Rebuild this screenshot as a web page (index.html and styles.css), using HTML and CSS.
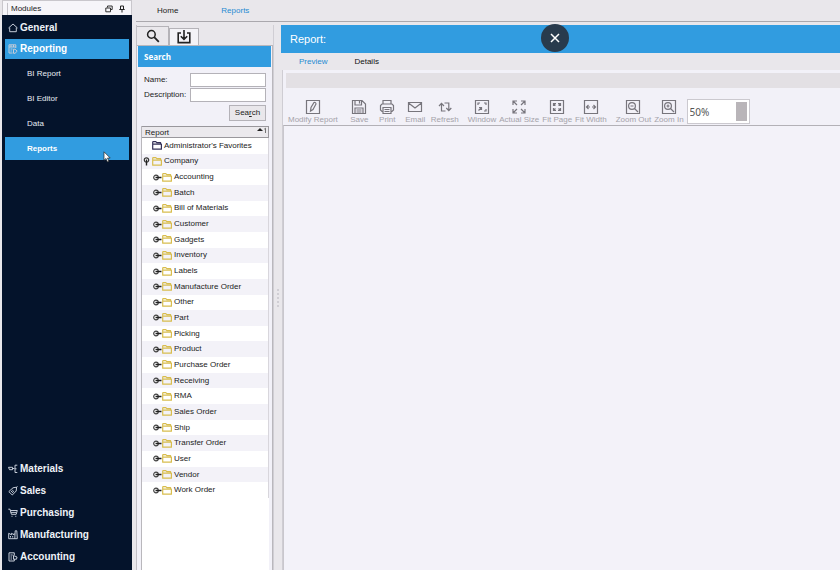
FILE: index.html
```html
<!DOCTYPE html>
<html lang="en">
<head>
<meta charset="utf-8">
<title>Reports</title>
<link rel="stylesheet" href="styles.css">
</head>
<body>
<svg class="sprite" aria-hidden="true">
  <symbol id="folder" viewBox="0 0 10 9"><path d="M.7 8.2V1.2Q.7.6 1.3.6H3.8L4.8 1.7H8.6V3.2M.7 8.2V3.2H9.4V8.2Z" fill="none" stroke="currentColor" stroke-width="1.2" stroke-linejoin="round"/></symbol>
  <symbol id="handle" viewBox="0 0 9 7"><circle cx="3" cy="3.5" r="2.3" fill="#fff" stroke="#444" stroke-width="1.2"/><path d="M2.5 3.5H8.5" stroke="#222" stroke-width="1.5"/></symbol>
  <symbol id="handle-open" viewBox="0 0 7 9"><circle cx="3.5" cy="3" r="2.2" fill="#fff" stroke="#333" stroke-width="1.2"/><path d="M3.5 2.5V8.5" stroke="#222" stroke-width="1.4"/></symbol>
</svg>

<aside class="sidebar">
  <header class="dock-title">
    <span>Modules</span>
    <button class="dock-button" aria-label="Float"><svg viewBox="0 0 8 8" width="8" height="8"><path d="M2.5 2.5V1H7.2V4.5H5.7M.8 3H5.5V6.8H.8Z" fill="none" stroke="#333"/></svg></button>
    <button class="dock-button" aria-label="Pin"><svg viewBox="0 0 8 8" width="8" height="8"><path d="M2.5 1H5.5V4.5H2.5ZM1.3 4.5H6.7M4 4.5V7.5" fill="none" stroke="#222"/></svg></button>
  </header>
  <nav class="modules">
    <a class="module" href="#"><svg viewBox="0 0 10 10"><path d="M.5 5 5 1 9.5 5M1.7 4.5V8.7H8.3V4.5"/></svg>General</a>
    <a class="module selected" href="#"><svg viewBox="0 0 10 10"><path d="M4.5 9H1V.8H7.8V4M1 3H7.8M2.5 5H4.5M2.5 7H3.8M3 1V3M5.5 1V3M5.5 5.2H7L9.2 7.2 7 9.3H5.5Z"/></svg>Reporting</a>
    <a class="page" href="#">BI Report</a>
    <a class="page" href="#">BI Editor</a>
    <a class="page" href="#">Data</a>
    <a class="page selected" href="#">Reports</a>
    <div class="spacer"></div>
    <a class="module" href="#"><svg viewBox="0 0 10 10"><path d="M.5 3.3H4.5V5.7H1.5ZM4.5 4.5H6.5M9.3 1.2H7V8.5H9.3M7 4.8H8.5"/></svg>Materials</a>
    <a class="module" href="#"><svg viewBox="0 0 10 10"><path d="M5 1.8 8.6 1.2 8.2 5 4.3 9 .8 5.6ZM3 5 5.2 7M4.2 4 6 5.8M8 1.8 9.5.5"/></svg>Sales</a>
    <a class="module" href="#"><svg viewBox="0 0 10 10"><path d="M.3 1.2H2L3.4 6.3H8.2L9.3 2.5H2.4M2.8 4.4H8.5M3.5 8.3H4.5M7.3 8.3H8.3"/></svg>Purchasing</a>
    <a class="module" href="#"><svg viewBox="0 0 10 10"><path d="M.7 8.7V3.3L3.5 4.8V3.3L6.2 4.8V3.3M.7 8.7H9.3L8.8.8H7.2L6.8 8.7M2.5 6V7.5M4.7 6V7.5"/></svg>Manufacturing</a>
    <a class="module" href="#"><svg viewBox="0 0 10 10"><path d="M6.3 3V.8H1V9H6.3V7M2.5 3H4.7M2.5 5H4M2.5 7H4M5.5 3.5 9 5 8.5 7.2H5.5Z"/></svg>Accounting</a>
  </nav>
  <svg class="cursor" viewBox="0 0 8 12" aria-hidden="true"><path d="M1 .8V9.2L3 7.5 4.4 11 5.9 10.3 4.5 7H7.2Z" fill="#fff" stroke="#222" stroke-width=".7"/></svg>
</aside>

<main class="main">
  <nav class="top-tabs">
    <a href="#">Home</a>
    <a class="current" href="#">Reports</a>
  </nav>
  <div class="workspace">
    <section class="finder">
      <div class="finder-tabs">
        <button class="finder-tab active" aria-label="Search"><svg viewBox="0 0 14 14" width="14" height="14"><circle cx="5.4" cy="5.4" r="3.8" fill="none" stroke="#222" stroke-width="1.5"/><path d="M8.2 8.2 12.8 12.8" stroke="#222" stroke-width="1.8"/></svg></button>
        <button class="finder-tab" aria-label="Import"><svg viewBox="0 0 14 14" width="14" height="14"><path d="M4 3H1.2V12.6H12.8V3H10M7 0V9M3.8 6.2 7 9.3 10.2 6.2" fill="none" stroke="#222" stroke-width="1.6"/></svg></button>
      </div>
      <div class="finder-body">
        <h2 class="finder-title">Search</h2>
        <form class="search-form">
          <label for="name">Name:</label><input id="name" type="text">
          <label for="description">Description:</label><input id="description" type="text">
          <button type="button">Sea<u>r</u>ch</button>
        </form>
        <div class="tree">
          <div class="tree-head"><span>Report</span><svg viewBox="0 0 10 7" width="10" height="7"><path d="M0 4 3 1 6 4Z" fill="#222"/><path d="M7.2 2.2 8.5 1.2V6" fill="none" stroke="#666" stroke-width=".9"/></svg></div>
          <ul class="tree-rows">
            <li class="favorites"><svg class="folder"><use href="#folder"/></svg>Administrator's Favorites</li>
            <li class="root"><svg class="handle-open"><use href="#handle-open"/></svg><svg class="folder"><use href="#folder"/></svg>Company</li>
            <li><svg class="handle"><use href="#handle"/></svg><svg class="folder"><use href="#folder"/></svg>Accounting</li>
            <li><svg class="handle"><use href="#handle"/></svg><svg class="folder"><use href="#folder"/></svg>Batch</li>
            <li><svg class="handle"><use href="#handle"/></svg><svg class="folder"><use href="#folder"/></svg>Bill of Materials</li>
            <li><svg class="handle"><use href="#handle"/></svg><svg class="folder"><use href="#folder"/></svg>Customer</li>
            <li><svg class="handle"><use href="#handle"/></svg><svg class="folder"><use href="#folder"/></svg>Gadgets</li>
            <li><svg class="handle"><use href="#handle"/></svg><svg class="folder"><use href="#folder"/></svg>Inventory</li>
            <li><svg class="handle"><use href="#handle"/></svg><svg class="folder"><use href="#folder"/></svg>Labels</li>
            <li><svg class="handle"><use href="#handle"/></svg><svg class="folder"><use href="#folder"/></svg>Manufacture Order</li>
            <li><svg class="handle"><use href="#handle"/></svg><svg class="folder"><use href="#folder"/></svg>Other</li>
            <li><svg class="handle"><use href="#handle"/></svg><svg class="folder"><use href="#folder"/></svg>Part</li>
            <li><svg class="handle"><use href="#handle"/></svg><svg class="folder"><use href="#folder"/></svg>Picking</li>
            <li><svg class="handle"><use href="#handle"/></svg><svg class="folder"><use href="#folder"/></svg>Product</li>
            <li><svg class="handle"><use href="#handle"/></svg><svg class="folder"><use href="#folder"/></svg>Purchase Order</li>
            <li><svg class="handle"><use href="#handle"/></svg><svg class="folder"><use href="#folder"/></svg>Receiving</li>
            <li><svg class="handle"><use href="#handle"/></svg><svg class="folder"><use href="#folder"/></svg>RMA</li>
            <li><svg class="handle"><use href="#handle"/></svg><svg class="folder"><use href="#folder"/></svg>Sales Order</li>
            <li><svg class="handle"><use href="#handle"/></svg><svg class="folder"><use href="#folder"/></svg>Ship</li>
            <li><svg class="handle"><use href="#handle"/></svg><svg class="folder"><use href="#folder"/></svg>Transfer Order</li>
            <li><svg class="handle"><use href="#handle"/></svg><svg class="folder"><use href="#folder"/></svg>User</li>
            <li><svg class="handle"><use href="#handle"/></svg><svg class="folder"><use href="#folder"/></svg>Vendor</li>
            <li><svg class="handle"><use href="#handle"/></svg><svg class="folder"><use href="#folder"/></svg>Work Order</li>
          </ul>
        </div>
      </div>
    </section>
    <div class="splitter"><span></span></div>
    <section class="report">
      <h1 class="report-title">Report:</h1>
      <nav class="report-tabs">
        <a class="current" href="#">Preview</a>
        <a href="#">Details</a>
      </nav>
      <div class="preview">
        <div class="status-bar"></div>
        <div class="toolbar">
          <div class="group">
            <button><svg viewBox="0 0 16 16"><path d="M1.5 1.5H14.5V14.5H1.5Z"/><path d="M5.5 12 6 8.5 9 3.5Q10.8 3 11 5L8 10.5Z"/></svg>Modify Report</button>
          </div>
          <div class="group">
            <button><svg viewBox="0 0 16 16"><path d="M1.5 1.5H11L14.5 5V14.5H1.5ZM4 1.5V6H10.5V1.5M8.5 2V4.5M4 14V9H12V14M5.5 11H10.5M5.5 13H10.5"/></svg>Save</button>
            <button><svg viewBox="0 0 16 16"><path d="M4 5V1.5H12V5M4 12.5H3L1.5 11V6.5L3 5H13L14.5 6.5V11L13 12.5H12M4 8.5H12V14.5H4ZM5.5 10.5H10.5M5.5 12.5H10.5"/></svg>Print</button>
            <button><svg viewBox="0 0 16 16"><path d="M1.5 3.5H14.5V12.5H1.5ZM1.5 4 8 9 14.5 4"/></svg>Email</button>
            <button><svg viewBox="0 0 16 16"><path d="M8.5 12H4.5V4.5M2 7 4.5 4.3 7 7M7.5 4H11.8V11.5M9.3 9 11.8 11.7 14.3 9"/></svg>Refresh</button>
          </div>
          <div class="group">
            <button><svg viewBox="0 0 16 16"><path d="M1.5 1.5H14.5V14.5H1.5ZM4 6V4H6M10 4H12V6M12 10V12H10M4.5 11.5 7.5 8.5M5 8.5H7.5V11"/></svg>Window</button>
            <button><svg viewBox="0 0 16 16"><path d="M2 6V2H6M2.5 2.5 6 6M10 2H14V6M13.5 2.5 10 6M2 10V14H6M2.5 13.5 6 10M14 10V14H10M13.5 13.5 10 10"/></svg>Actual Size</button>
            <button><svg viewBox="0 0 16 16"><path d="M1.5 1.5H14.5V14.5H1.5ZM4.5 7V4.5H7M9 4.5H11.5V7M4.5 9V11.5H7M11.5 9V11.5H9M5 5 6.5 6.5M11 5 9.5 6.5M5 11 6.5 9.5M11 11 9.5 9.5"/></svg>Fit Page</button>
            <button><svg viewBox="0 0 16 16"><path d="M1.5 1.5H14.5V14.5H1.5ZM3.5 8H7M5.5 6 3.5 8 5.5 10M9 8H12.5M10.5 6 12.5 8 10.5 10"/></svg>Fit Width</button>
          </div>
          <div class="group">
            <button><svg viewBox="0 0 16 16"><path d="M1.5 1.5H14.5V14.5H1.5ZM9.5 9.5 13 13M5.5 7H8.5"/><circle cx="7" cy="7" r="3.4"/></svg>Zoom Out</button>
            <button><svg viewBox="0 0 16 16"><path d="M1.5 1.5H14.5V14.5H1.5ZM9.5 9.5 13 13M5.5 7H8.5M7 5.5V8.5"/><circle cx="7" cy="7" r="3.4"/></svg>Zoom In</button>
            <div class="zoom-level"><select aria-label="Zoom level"><option>50%</option></select></div>
          </div>
        </div>
        <div class="canvas"></div>
      </div>
    </section>
  </div>
</main>
<button class="close" aria-label="Close"><svg viewBox="0 0 10 10" width="10" height="10"><path d="M1 1 9 9M9 1 1 9" stroke="#fff" stroke-width="1.5"/></svg></button>
</body>
</html>
```
FILE: styles.css
```css
* { box-sizing: border-box; }

body {
  margin: 0;
  height: 100vh;
  display: flex;
  gap: 4px;
  padding-left: 2px;
  overflow: hidden;
  background: #e9e7eb;
  color: #222;
  font: 8px/12px "Liberation Sans", Arial, sans-serif;
}

a { color: inherit; text-decoration: none; }
button, input, select { font: inherit; color: inherit; margin: 0; padding: 0; }
.sprite { position: absolute; width: 0; height: 0; }

/* Module sidebar */
.sidebar {
  position: relative;
  flex: 0 0 130px;
  display: flex;
  flex-direction: column;
}

.dock-title {
  display: flex;
  align-items: center;
  height: 15px;
  padding: 2px 3px 0 4px;
  border: 1px solid #c9c7cc;
  border-bottom: 0;
  background: #f6f5f9;
}

.dock-title span { flex: 1; padding-left: 3px; border-left: 1px solid #c4c2c8; }
.dock-button { width: 13px; height: 12px; border: 0; background: none; line-height: 0; }

.modules {
  flex: 1;
  display: flex;
  flex-direction: column;
  padding: 2px 3px;
  background: #04132b;
}

.module {
  display: flex;
  align-items: center;
  gap: 2px;
  height: 22px;
  padding-left: 3px;
  color: #eef2f8;
  font-size: 10px;
  font-weight: bold;
}

.module svg { width: 10px; height: 10px; fill: none; stroke: #c5ccd8; stroke-width: 1; }
.module.selected { height: 20px; }
.page { height: 25px; padding-left: 22px; color: #e6ebf3; line-height: 25px; }
.modules .selected { background: #319ce0; color: #fff; }
.module.selected + .page { margin-top: 2px; }
.page.selected { height: 23px; margin-top: 1px; line-height: 23px; font-weight: bold; }
.spacer { flex: 1; }
.cursor { position: absolute; left: 101px; top: 151px; width: 8px; height: 12px; }

/* Main area */
.main { flex: 1; min-width: 0; display: flex; flex-direction: column; }

.top-tabs {
  display: flex;
  gap: 43px;
  height: 22px;
  padding-left: 21px;
  border-bottom: 1px solid #aaa8ad;
  line-height: 22px;
}

.current { color: #1f8bd2; }
.workspace { flex: 1; min-height: 0; display: flex; padding-top: 3px; }

.finder {
  flex: 0 0 137px;
  display: flex;
  flex-direction: column;
  border-left: 1px solid #c2c0c6;
}

.finder-tabs { display: flex; align-items: flex-end; height: 20px; }

.finder-tab {
  display: grid;
  place-items: center;
  width: 30px;
  height: 17px;
  border: 1px solid #b5b3b8;
  border-bottom: 0;
  background: #f4f3f7;
}

.finder-tab.active { width: 32px; height: 19px; background: #eae8ec; border-left: 0; }

.finder-body {
  flex: 1;
  display: flex;
  flex-direction: column;
  border: solid #b9b7bc;
  border-width: 1px 1px 0 0;
  background: #f2f1f8;
}

.finder-title {
  height: 21px;
  margin: 0 1px;
  padding-left: 6px;
  background: #319ce0;
  color: #fff;
  font: bold 8px/21px "Open Sans", "Noto Sans", sans-serif;
}

.search-form {
  display: grid;
  grid-template-columns: 1fr 76px;
  gap: 1px 0;
  align-items: center;
  padding: 6px 6px 5px 7px;
}

.search-form input { width: 100%; height: 14px; border: 1px solid #b4b2b8; background: #fff; }

.search-form button {
  grid-column: 2;
  justify-self: end;
  width: 37px;
  height: 16px;
  margin-top: 2px;
  border: 1px solid #b4b2b8;
  background: #e9e7eb;
}

.tree {
  flex: 1;
  margin: 0 3px 0 4px;
  border-left: 1px solid #b9b7bc;
  background: #fff;
}

.tree-head {
  display: flex;
  justify-content: space-between;
  height: 12px;
  padding: 0 1px 0 3px;
  border: 1px solid #99979c;
  border-left: 0;
  background: #ebe9ed;
  line-height: 11px;
}

.tree-rows {
  display: grid;
  grid-auto-rows: 1fr;
  height: 360px;
  margin: 0;
  padding: 0;
  border-right: 1px solid #d8d6dc;
  list-style: none;
}

.tree-rows li { display: flex; align-items: center; padding-left: 11px; white-space: nowrap; }
.tree-rows li:nth-child(even) { background: #f3f2f8; }
.tree-rows .root { padding-left: 1px; }
.tree-rows .favorites { padding-left: 10px; }
.favorites .folder { color: #343057; }
.folder { width: 10px; height: 9px; margin-right: 2px; color: #d8bd4e; }
.handle { width: 9px; height: 7px; }
.handle-open { width: 7px; height: 9px; margin-right: 2px; }

.splitter {
  flex: 0 0 8px;
  display: grid;
  place-items: center;
  border-left: 1px solid #d0ced4;
}

.splitter span {
  width: 4px;
  height: 20px;
  background: radial-gradient(circle, #d0ced4 1px, transparent 1px) 0 0 / 4px 4px;
}

/* Report viewer */
.report { flex: 1; min-width: 0; display: flex; flex-direction: column; }

.report-title {
  height: 28px;
  margin: 0;
  padding-left: 9px;
  background: #319ce0;
  color: #fff;
  font-size: 11px;
  font-weight: normal;
  line-height: 28px;
}

.report-tabs { display: flex; gap: 27px; height: 17px; padding-left: 18px; line-height: 17px; }
.report-tabs a:last-child { color: #111; }

.preview {
  flex: 1;
  display: flex;
  flex-direction: column;
  margin-left: 1px;
  border-left: 1px solid #cfcdd3;
  background: #f2f1f8;
}

.status-bar { height: 15px; margin: 3px 0 0 3px; background: #e3e0e4; }

.toolbar {
  display: flex;
  gap: 9px;
  height: 37px;
  padding: 11px 0 0 5px;
  color: #a5a3aa;
}

.group { display: flex; gap: 3px; }

.group button {
  display: flex;
  flex-direction: column;
  align-items: center;
  justify-content: flex-start;
  min-width: 25px;
  border: 0;
  background: none;
  white-space: nowrap;
  line-height: 10px;
}

.group svg { width: 16px; height: 16px; fill: none; stroke: #77757c; stroke-width: 1.2; }

.zoom-level {
  display: flex;
  width: 63px;
  height: 25px;
  padding: 2px;
  border: 1px solid #cbc9cf;
  background: #fff;
}

.zoom-level::after { content: ""; width: 11px; background: #b9b5b9; }

.zoom-level select {
  flex: 1;
  min-width: 0;
  border: 0;
  appearance: none;
  background: none;
  color: #555;
  font: 10px/20px "Noto Sans", sans-serif;
}

.canvas { flex: 1; border-top: 1px solid #b3b1b7; border-left: 1px solid #c9c7cd; background: #f3f2f9; }

/* Overlay close control */
.close {
  position: absolute;
  left: calc(66% - 13px);
  top: 24px;
  display: grid;
  place-items: center;
  width: 28px;
  height: 28px;
  border: 0;
  border-radius: 50%;
  background: #283b4d;
}
```
